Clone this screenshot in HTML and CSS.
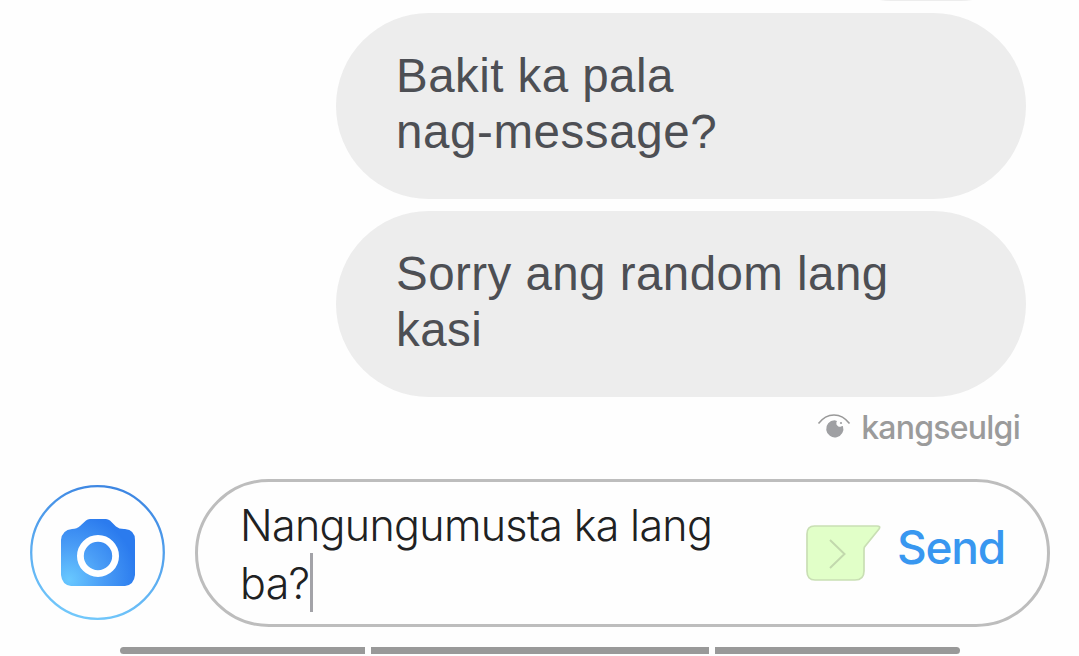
FILE: index.html
```html
<!DOCTYPE html>
<html lang="tl">
<head>
<meta charset="utf-8">
<title>Chat</title>
<link rel="stylesheet" href="styles.css">
</head>
<body>
<main class="chat">
  <section class="messages">
    <div class="bubble bubble-short"></div>
    <div class="bubble">Bakit ka pala<br><span class="wide">nag-message?</span></div>
    <div class="bubble">Sorry ang random lang<br>kasi</div>
  </section>
  <div class="seen">
    <svg class="eye" width="34" height="28" viewBox="0 0 34 28">
      <path d="M1.500 10.500C10-1 24-1 32.500 10.500" fill="none" stroke="#999" stroke-width="1.500"/>
      <path d="M17.500 7.200A8.600 8.600 0 1 0 25.900 13L24.500 13.200Q22.800 14.500 21 13.200Q19 12 19.300 9.800L20 8Z" fill="#9fa0a3"/>
      <circle cx="24" cy="10" r="1.100" fill="#9fa0a3"/>
    </svg>
    <span class="seen-name">kangseulgi</span>
  </div>
  <section class="composer">
    <button class="camera" aria-label="Camera">
      <svg width="135" height="135" viewBox="0 0 135 135">
        <defs>
          <linearGradient id="ring" x1=".65" y1="0" x2=".4" y2="1">
            <stop offset="0" stop-color="#3c85e2"/><stop offset="1" stop-color="#72c8fb"/>
          </linearGradient>
          <radialGradient id="body" gradientUnits="userSpaceOnUse" cx="39" cy="95" r="68">
            <stop offset="0" stop-color="#68c8ff"/><stop offset=".5" stop-color="#4a9df6"/><stop offset="1" stop-color="#2b7bee"/>
          </radialGradient>
        </defs>
        <circle cx="67.500" cy="67.500" r="66.300" fill="none" stroke="url(#ring)" stroke-width="2.300"/>
        <path d="M42 44Q47 44 50 41L56 35.500Q57.500 34 60 34H76Q78 34 80 35.500L86 41.500Q89 44 94 44H95Q105 45 105 55V90Q104 100 95 101H41Q32 100 31 90V55Q32 45 42 44Z" fill="url(#body)"/>
        <circle cx="68" cy="71" r="17.600" fill="none" stroke="#fff" stroke-width="6.800"/>
      </svg>
    </button>
    <div class="field">
      <div class="draft">Nangungumusta ka lang<br>ba?<i class="caret"></i></div>
      <svg class="sticker" width="76" height="58" viewBox="0 0 76 58">
        <path d="M9.500 2H72Q76 2 74 5L59.500 23Q59 24 59 26V47Q59 56 50 56H10Q2 56 2 47V10Q2 2 9.500 2Z" fill="#e1ffc8" stroke="#c9dfb4" stroke-width="1.700"/>
        <path d="M25 16L39.500 30L25 44" fill="none" stroke="#c2d8ad" stroke-width="2"/>
      </svg>
      <button class="send">Send</button>
    </div>
  </section>
  <nav class="navbar"><i class="nav-left"></i><i class="nav-mid"></i><i class="nav-right"></i></nav>
</main>
</body>
</html>
```
FILE: styles.css
```css
* { box-sizing: border-box; }
body { margin: 0; background: #fefefe; }
button { padding: 0; border: 0; background: none; }
svg { display: block; flex: none; }
.chat { width: 1079px; height: 656px; overflow: hidden; display: flex; flex-direction: column; background: #fefefe; }
.messages { height: 397px; flex: none; padding-right: 53px; display: flex; flex-direction: column; justify-content: flex-end; align-items: flex-end; gap: 12px; overflow: hidden; }
.bubble { width: 690px; height: 186px; flex: none; padding: 35px 60px; border-radius: 93px; background: #ededed; color: #4d4f54; font: 47.5px/56px "Liberation Sans", Arial, sans-serif; letter-spacing: .45px; white-space: nowrap; }
.wide { letter-spacing: .58px; }
.bubble-short { width: 200px; height: 130px; padding: 0; border-radius: 65px; }
.seen { height: 82px; flex: none; padding: 11px 59px 0 0; display: flex; justify-content: flex-end; align-items: flex-start; gap: 10px; color: #9b9b9b; font: 500 32px/40px Inter, sans-serif; letter-spacing: -.75px; }
.eye { margin-top: 5px; }
.composer { height: 148px; flex: none; padding: 0 29px 0 30px; display: flex; align-items: flex-start; gap: 30px; }
.camera { width: 135px; height: 135px; margin-top: 6px; flex: none; }
.field { width: 855px; height: 148px; padding: 14px 39px 0 42px; border: 3px solid #bdbdbd; border-radius: 74px; display: flex; align-items: flex-start; }
.draft { width: 565px; flex: none; color: #202122; font: 300 43px/58px Inter, sans-serif; letter-spacing: -.68px; white-space: nowrap; }
.caret { display: inline-block; width: 3px; height: 59px; margin: -16px 0 -8px 1px; vertical-align: -13px; position: relative; top: -8px; background: #a3a3a8; }
.sticker { margin-top: 28px; }
.send { margin: 23px 0 0 16px; color: #3897f0; font: 500 46px/56px Inter, sans-serif; letter-spacing: -1.2px; white-space: nowrap; }
.navbar { flex: none; margin: 20px 119px 0 120px; height: 7px; display: flex; gap: 6px; }
.navbar i { background: #999; height: 7px; }
.nav-left { width: 245px; border-radius: 4px 0 0 4px; }
.nav-mid { width: 338px; }
.nav-right { width: 245px; border-radius: 0 4px 4px 0; }
```
